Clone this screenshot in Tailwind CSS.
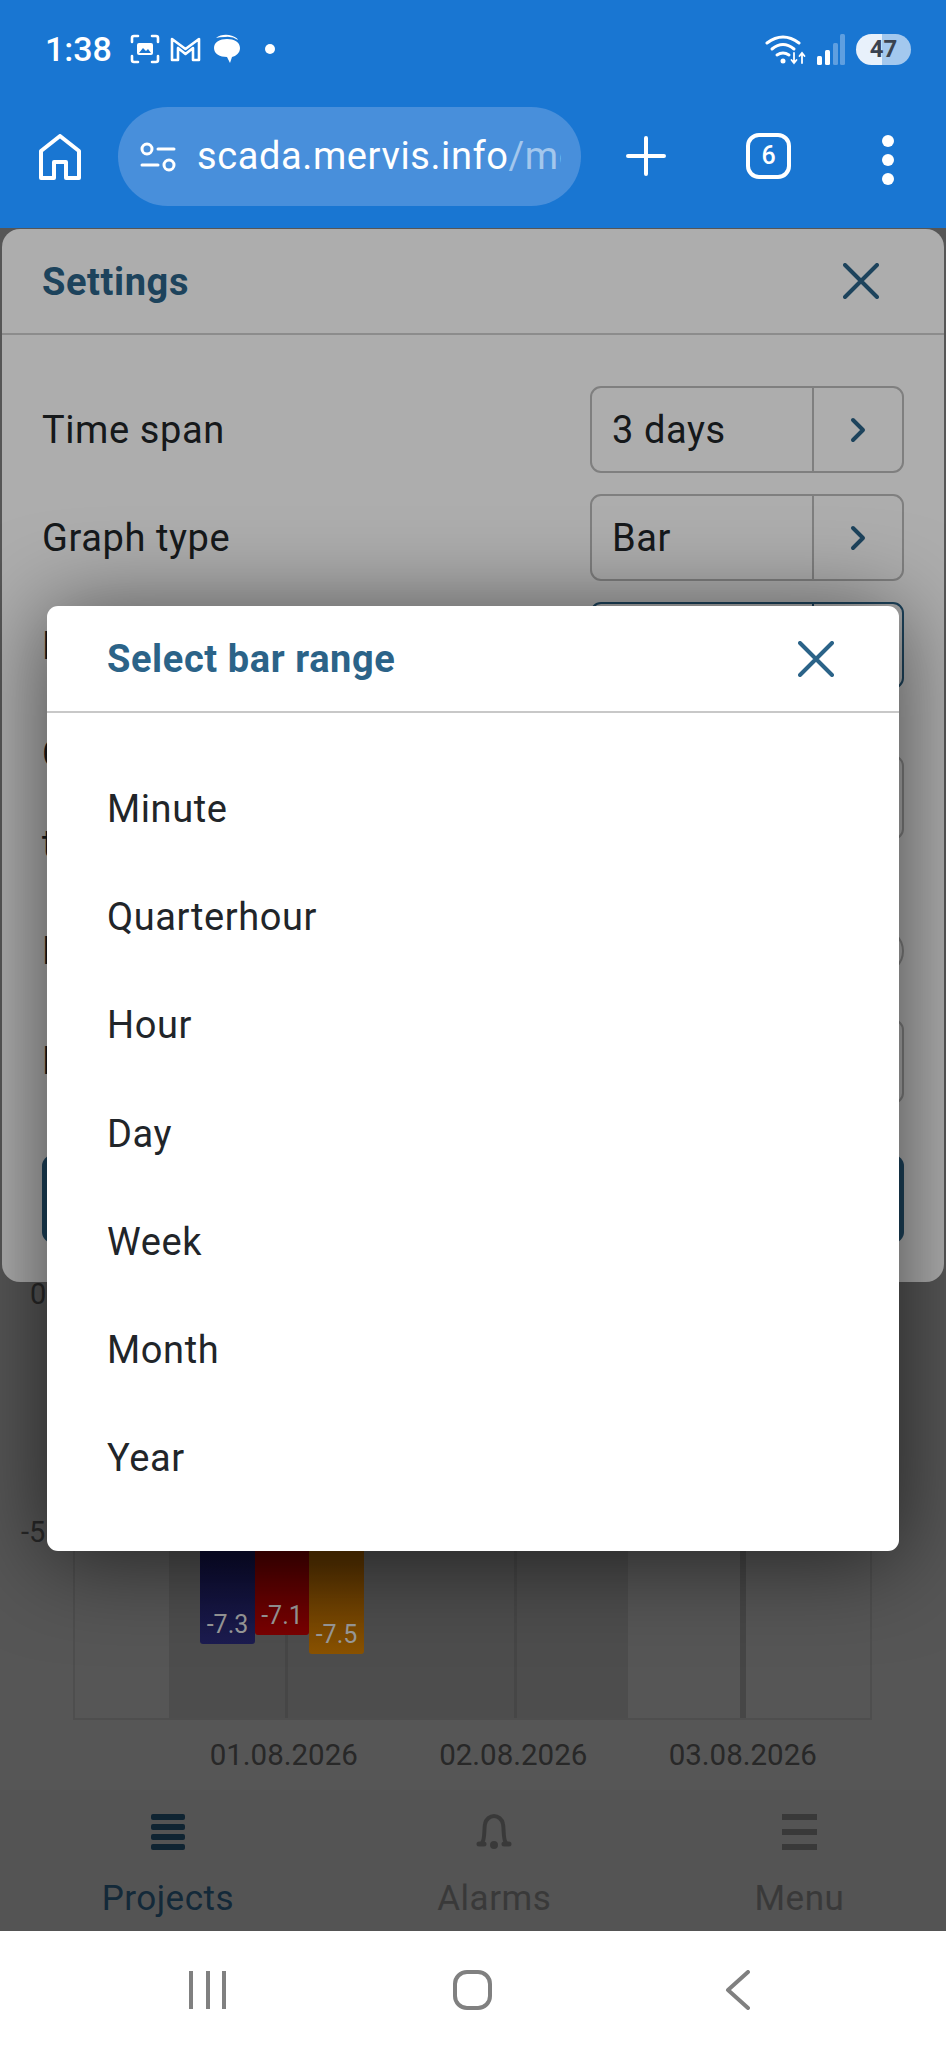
<!DOCTYPE html>
<html lang="en">
<head>
    <meta charset="UTF-8">
    <meta name="viewport" content="width=device-width, initial-scale=1.0">
    <title>Settings - Select bar range</title>
    <script src="https://cdn.jsdelivr.net/npm/@tailwindcss/browser@4"></script>
</head>
<body class="w-[946px] h-[2049px] overflow-hidden bg-white flex flex-col font-['Roboto',sans-serif]">

    <!-- Status bar + browser toolbar -->
    <header class="h-[228px] shrink-0 bg-[#1976d2] text-white">
        <div class="h-[98px] pl-[45px] pr-[35px] flex items-center">
            <span class="text-[34px] font-medium w-[85px]">1:38</span>
            <svg class="w-[30px] h-[30px]" viewBox="0 0 30 30" fill="none" stroke="white" stroke-width="2.6" stroke-linecap="round">
                <path d="M2 8V4q0-2 2-2h4M22 2h4q2 0 2 2v4M2 22v4q0 2 2 2h4M22 28h4q2 0 2-2v-4"/>
                <rect x="7" y="9" width="16" height="12" rx="2" fill="white" stroke="none"/>
                <path d="M9 19l4-5 3 3 2-2 3 4z" fill="#1976d2" stroke="none"/>
            </svg>
            <svg class="w-[31px] h-[26px] ml-[10px]" viewBox="0 0 31 26" fill="none" stroke="white" stroke-width="2.6" stroke-linejoin="round">
                <path d="M2 24V3l13.500 10L29 3v21h-6V12l-7.500 6L8 12v12z"/>
            </svg>
            <svg class="w-[28px] h-[32px] ml-[12px]" viewBox="0 0 28 32" fill="white">
                <path d="M3 5q5-4 13-3 8 2 9 5-6-4-13-3-6 0-9 1z"/>
                <path d="M14 6c7 0 13 3 13 9 0 5-4 8-8 9l-2 6-3-6C7 24 1 21 1 15 1 9 7 6 14 6z"/>
            </svg>
            <span class="w-[10px] h-[10px] rounded-full bg-white ml-[24px]"></span>

            <svg class="w-[42px] h-[32px] ml-auto" viewBox="0 0 42 32" fill="none" stroke="white" stroke-width="3" stroke-linecap="round">
                <path d="M2 10q16-12 32 0"/>
                <path d="M7 16q11-9 22 0"/>
                <path d="M12 22q6-4 12 0"/>
                <circle cx="18" cy="28" r="2.500" fill="white" stroke="none"/>
                <path d="M29 20v10m-2.500-3l2.500 3 2.500-3M37 30V20m-2.500 3l2.500-3 2.500 3" stroke-width="1.800"/>
            </svg>
            <svg class="w-[28px] h-[31px] ml-[10px]" viewBox="0 0 28 31">
                <rect x="0" y="22" width="5" height="9" rx="1.500" fill="white"/>
                <rect x="8" y="16" width="5" height="15" rx="1.500" fill="white"/>
                <rect x="16" y="9" width="5" height="22" rx="1.500" fill="#5f9fe0"/>
                <rect x="23" y="0" width="5" height="31" rx="1.500" fill="#5f9fe0"/>
            </svg>
            <div class="w-[55px] h-[31px] ml-[11px] rounded-full bg-[linear-gradient(90deg,#e8f1fb_0_47%,#a3c8ee_47%_100%)] flex items-center justify-center text-[24px] font-bold text-[#3a4350]">47</div>
        </div>

        <div class="h-[130px] flex items-start">
            <svg class="w-[42px] h-[46px] ml-[39px] mt-[36px]" viewBox="0 0 42 46" fill="none" stroke="white" stroke-width="4" stroke-linejoin="round">
                <path d="M2 17L21 2l19 15v27H27V28H15v16H2z"/>
            </svg>
            <div class="w-[463px] h-[99px] ml-[37px] mt-[9px] pl-[22px] pr-[20px] rounded-full bg-[#488fdb] flex items-center">
                <svg class="w-[36px] h-[30px] shrink-0" viewBox="0 0 36 30" fill="none" stroke="white" stroke-width="3" stroke-linecap="round">
                    <circle cx="7" cy="7" r="5"/>
                    <path d="M18 7h16M2 23h16"/>
                    <circle cx="29" cy="23" r="5"/>
                </svg>
                <div class="ml-[21px] overflow-hidden whitespace-nowrap text-[38px] tracking-[0.6px]">scada.mervis.info<span class="text-white/50">/mobile</span></div>
            </div>
            <svg class="w-[40px] h-[40px] ml-[45px] mt-[38px]" viewBox="0 0 40 40" fill="none" stroke="white" stroke-width="4" stroke-linecap="round">
                <path d="M20 2v36M2 20h36"/>
            </svg>
            <div class="w-[45px] h-[46px] ml-[80px] mt-[35px] rounded-[13px] border-[4px] border-white flex items-center justify-center text-[25px] font-medium">6</div>
            <div class="ml-[91px] mt-[37px] flex flex-col gap-[7px]">
                <span class="w-[12px] h-[12px] rounded-full bg-white"></span>
                <span class="w-[12px] h-[12px] rounded-full bg-white"></span>
                <span class="w-[12px] h-[12px] rounded-full bg-white"></span>
            </div>
        </div>
    </header>

    <!-- Page area with stacked dialogs -->
    <main class="relative h-[1703px] shrink-0 overflow-hidden bg-white flex flex-col justify-end">

        <!-- Chart behind the dialogs -->
        <div class="relative h-[426px] ml-[73px] w-[799px] flex border-2 border-t-0 border-[#e8e8e8] bg-white">
            <div class="w-[94px]"></div>
            <div class="w-[459px] bg-[#e4e4e4]"></div>
            <span class="absolute left-[210px] top-0 bottom-0 w-[3px] bg-[#cfcfcf]"></span>
            <span class="absolute left-[439px] top-0 bottom-0 w-[3px] bg-[#cfcfcf]"></span>
            <span class="absolute left-[665px] top-0 bottom-0 w-[6px] bg-[#cfcfcf]"></span>
            <span class="absolute left-[-45px] top-[-21px] text-[29px] text-[#777777]">0</span>
            <span class="absolute left-[-54px] top-[217px] text-[29px] text-[#777777]">-5</span>
        </div>
        <div class="h-[70px] pl-[169px] flex items-center text-[29.500px] text-[#777777]">
            <span class="w-[229.500px] text-center">01.08.2026</span>
            <span class="w-[229.500px] text-center">02.08.2026</span>
            <span class="w-[229.500px] text-center">03.08.2026</span>
        </div>

        <!-- Bottom tabs -->
        <nav class="h-[141px] bg-[#f8f8f8] flex justify-around">
            <div class="flex flex-col items-center pt-[24px] text-[35px] tracking-[0.5px] text-[#3a7aaa]">
                <div class="w-[34px] h-[36px] flex flex-col justify-between">
                    <span class="h-[6px] rounded-[2px] bg-[#2f6a96]"></span>
                    <span class="h-[6px] rounded-[2px] bg-[#2f6a96]"></span>
                    <span class="h-[6px] rounded-[2px] bg-[#2f6a96]"></span>
                    <span class="h-[6px] rounded-[2px] bg-[#2f6a96]"></span>
                </div>
                <span class="mt-[23px]">Projects</span>
            </div>
            <div class="flex flex-col items-center pt-[24px] text-[35px] tracking-[0.5px] text-[#ababab]">
                <svg class="w-[36px] h-[36px]" viewBox="0 0 36 36" fill="none" stroke="#ababab" stroke-width="4" stroke-linecap="round">
                    <path d="M6 29C9 26 8 14 9 10c1-5 5-8 9-8s8 3 9 8c1 4 0 16 3 19"/>
                    <path d="M3 30h5M28 30h5" stroke-width="5"/>
                    <circle cx="18" cy="31" r="4" fill="#ababab" stroke="none"/>
                </svg>
                <span class="mt-[23px]">Alarms</span>
            </div>
            <div class="flex flex-col items-center pt-[24px] text-[35px] tracking-[0.5px] text-[#ababab]">
                <div class="w-[35px] h-[36px] flex flex-col justify-between">
                    <span class="h-[6px] bg-[#ababab]"></span>
                    <span class="h-[6px] bg-[#ababab]"></span>
                    <span class="h-[6px] bg-[#ababab]"></span>
                </div>
                <span class="mt-[23px]">Menu</span>
            </div>
        </nav>

        <div class="absolute inset-0 bg-black/50"></div>

        <!-- Settings dialog -->
        <section class="absolute left-[2px] right-[2px] top-[1px] h-[1053px] rounded-[18px] bg-white text-[38px] tracking-[0.6px] text-[#212529]">
            <div class="h-[106px] px-[40px] flex items-center justify-between border-b-2 border-[#cfcfcf]">
                <h2 class="pt-[2px] font-bold text-[#2b6388]">Settings</h2>
                <svg class="w-[36px] h-[36px] mr-[25px]" viewBox="0 0 36 36" fill="none" stroke="#2b6388" stroke-width="4" stroke-linecap="round">
                    <path d="M2 2l32 32M34 2L2 34"/>
                </svg>
            </div>
            <div class="pt-[51px] pl-[40px] pr-[40px]">
                <div class="flex items-center justify-between h-[87px]">
                    <span class="pt-[2px]">Time span</span>
                    <div class="w-[314px] h-full rounded-[11px] border-2 border-[#bbbbbb] flex">
                        <span class="w-[222px] pl-[20px] pt-[2px] flex items-center border-r-2 border-[#bbbbbb]">3 days</span>
                        <span class="flex-1 flex items-center justify-center">
                            <svg class="w-[16px] h-[26px]" viewBox="0 0 16 26" fill="none" stroke="#2b6388" stroke-width="4" stroke-linecap="round" stroke-linejoin="round"><path d="M3 3l10 10L3 23"/></svg>
                        </span>
                    </div>
                </div>
                <div class="flex items-center justify-between h-[87px] mt-[21px]">
                    <span class="pt-[2px]">Graph type</span>
                    <div class="w-[314px] h-full rounded-[11px] border-2 border-[#bbbbbb] flex">
                        <span class="w-[222px] pl-[20px] pt-[2px] flex items-center border-r-2 border-[#bbbbbb]">Bar</span>
                        <span class="flex-1 flex items-center justify-center">
                            <svg class="w-[16px] h-[26px]" viewBox="0 0 16 26" fill="none" stroke="#2b6388" stroke-width="4" stroke-linecap="round" stroke-linejoin="round"><path d="M3 3l10 10L3 23"/></svg>
                        </span>
                    </div>
                </div>
                <div class="flex items-center justify-between h-[87px] mt-[21px]">
                    <span class="pt-[2px]">Bar range</span>
                    <div class="w-[314px] h-full rounded-[11px] border-2 border-[#2b6388] flex">
                        <span class="w-[222px] pl-[20px] flex items-center border-r-2 border-[#2b6388]"></span>
                    </div>
                </div>
                <div class="flex items-center justify-between h-[85px] mt-[66px]">
                    <span class="leading-[90px] pt-[2px]">Compare<br>to</span>
                    <div class="w-[314px] h-full rounded-[11px] border-2 border-[#bbbbbb]"></div>
                </div>
                <div class="flex items-center justify-between h-[46px] mt-[88px]">
                    <span>Labels</span>
                    <div class="w-[90px] h-full rounded-full border-2 border-[#bbbbbb]"></div>
                </div>
                <div class="flex items-center justify-between h-[85px] mt-[45px]">
                    <span>Legend</span>
                    <div class="w-[314px] h-full rounded-[11px] border-2 border-[#bbbbbb]"></div>
                </div>
                <div class="h-[88px] mt-[51px] rounded-[11px] bg-[#2b6388]"></div>
            </div>
        </section>

        <div class="absolute inset-0 bg-black/32"></div>

        <!-- Bars keep their brighter colours above the backdrop -->
        <div class="absolute left-[200px] top-[1066px] flex items-start text-[25px] text-[#9a9a9a]">
            <div class="w-[55px] h-[350px] rounded-b-[3px] bg-[linear-gradient(#0c0c30_75%,#1c1c50)] flex items-end justify-center pb-[1px]">-7.3</div>
            <div class="w-[54px] h-[341px] rounded-b-[3px] bg-[linear-gradient(#4a0000_75%,#7a0000)] flex items-end justify-center pb-[1px]">-7.1</div>
            <div class="w-[55px] h-[360px] rounded-b-[3px] bg-[linear-gradient(#5a3400_75%,#8a5200)] flex items-end justify-center pb-[1px]">-7.5</div>
        </div>

        <!-- Select bar range dialog -->
        <section class="absolute left-[47px] top-[378px] w-[852px] h-[945px] rounded-[11px] bg-white shadow-[0_8px_90px_rgba(0,0,0,0.6)]">
            <div class="h-[107px] pl-[60px] pr-[65px] flex items-center justify-between border-b-2 border-[#c8c8c8]">
                <h2 class="pt-[2px] text-[38px] tracking-[0.6px] font-bold text-[#2b6388]">Select bar range</h2>
                <svg class="w-[36px] h-[36px]" viewBox="0 0 36 36" fill="none" stroke="#2b6388" stroke-width="4" stroke-linecap="round">
                    <path d="M2 2l32 32M34 2L2 34"/>
                </svg>
            </div>
            <ul class="pt-[42px] pl-[60px] text-[38px] tracking-[0.6px] text-[#212529]">
                <li class="h-[108.300px] flex items-center">Minute</li>
                <li class="h-[108.300px] flex items-center">Quarterhour</li>
                <li class="h-[108.300px] flex items-center">Hour</li>
                <li class="h-[108.300px] flex items-center">Day</li>
                <li class="h-[108.300px] flex items-center">Week</li>
                <li class="h-[108.300px] flex items-center">Month</li>
                <li class="h-[108.300px] flex items-center">Year</li>
            </ul>
        </section>
    </main>

    <!-- Android navigation bar -->
    <footer class="flex-1 bg-white flex items-center">
        <div class="w-[37px] h-[38px] ml-[189px] flex justify-between">
            <span class="w-[4px] h-full bg-[#808080]"></span>
            <span class="w-[4px] h-full bg-[#808080]"></span>
            <span class="w-[4px] h-full bg-[#808080]"></span>
        </div>
        <div class="w-[39px] h-[40px] ml-[227px] rounded-[14px] border-[4px] border-[#808080]"></div>
        <svg class="w-[26px] h-[40px] ml-[233px]" viewBox="0 0 26 40" fill="none" stroke="#808080" stroke-width="4" stroke-linecap="round" stroke-linejoin="round">
            <path d="M23 2L3 20l20 18"/>
        </svg>
    </footer>

</body>
</html>
